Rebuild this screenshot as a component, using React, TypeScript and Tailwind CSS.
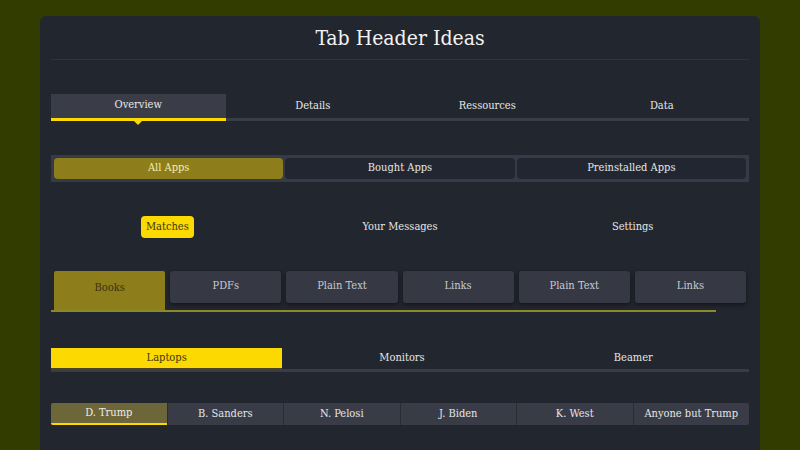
import { useState } from "react";

const font = { fontFamily: '"DejaVu Serif Condensed", "DejaVu Serif", "Liberation Serif", serif' };

function TopTabs() {
  const tabs = ["Overview", "Details", "Ressources", "Data"];
  const [active, setActive] = useState(0);
  return (
    <div className="flex items-start mt-[34px] border-b-[3px] border-[#3a3d47]">
      {tabs.map((t, i) => (
        <button
          key={t}
          onClick={() => setActive(i)}
          className={
            i === active
              ? "relative flex-1 h-[27px] -mb-[3px] pb-[2px] bg-[#3a3d47] border-b-[3px] border-[#fcd900] text-[11px] text-[#e6e6e6]"
              : "relative flex-1 h-[24px] pt-[1px] text-[11px] text-[#e6e6e6]"
          }
        >
          {t}
          {i === active && (
            <span className="absolute left-1/2 -translate-x-1/2 top-full w-0 h-0 border-l-[7px] border-r-[7px] border-t-[7px] border-l-transparent border-r-transparent border-t-[#fcd900]" />
          )}
        </button>
      ))}
    </div>
  );
}

function Segmented() {
  const tabs = ["All Apps", "Bought Apps", "Preinstalled Apps"];
  const [active, setActive] = useState(0);
  return (
    <div className="flex gap-[2px] mt-[34px] p-[3px] bg-[#363946]">
      {tabs.map((t, i) => (
        <button
          key={t}
          onClick={() => setActive(i)}
          className={
            i === active
              ? "flex-1 h-[21px] rounded-[4px] bg-[#8d7d1b] text-[11px] text-[#f3ecb2]"
              : "flex-1 h-[21px] rounded-[4px] bg-[#222630] text-[11px] text-[#e6e6e6]"
          }
        >
          {t}
        </button>
      ))}
    </div>
  );
}

function Pills() {
  const tabs = ["Matches", "Your Messages", "Settings"];
  const [active, setActive] = useState(0);
  return (
    <div className="flex mt-[34px]">
      {tabs.map((t, i) => (
        <div key={t} className="flex-1 flex justify-center">
          <button
            onClick={() => setActive(i)}
            className={
              i === active
                ? "h-[22px] px-[5px] rounded-[4px] bg-[#fcd900] text-[11px] text-[#3b3612]"
                : "h-[22px] px-[5px] rounded-[4px] text-[11px] text-[#e6e6e6]"
            }
          >
            {t}
          </button>
        </div>
      ))}
    </div>
  );
}

function CardTabs() {
  const tabs = ["Books", "PDFs", "Plain Text", "Links", "Plain Text", "Links"];
  const [active, setActive] = useState(0);
  return (
    <div className="mt-[33px]">
      <div className="flex gap-[5px] px-[3px] items-start">
        {tabs.map((t, i) => (
          <button
            key={i}
            onClick={() => setActive(i)}
            className={
              i === active
                ? "flex-1 h-[39px] rounded-t-[2px] bg-[#8d7d1b] text-[11px] text-[#3a3410] pb-[5px]"
                : "flex-1 h-[32px] rounded-[3px] bg-[#363943] shadow-[0_2px_4px_rgba(0,0,0,0.45)] text-[11px] text-[#c9cad0] pb-[2px]"
            }
          >
            {t}
          </button>
        ))}
      </div>
      <div className="w-[95.3%] h-[2px] bg-[#8c8a28]" />
    </div>
  );
}

function LineTabs() {
  const tabs = ["Laptops", "Monitors", "Beamer"];
  const [active, setActive] = useState(0);
  return (
    <div className="flex mt-[36px] border-b-[3px] border-[#393c46]">
      {tabs.map((t, i) => (
        <button
          key={t}
          onClick={() => setActive(i)}
          className={
            i === active
              ? "flex-1 h-[22px] -mb-[3px] mr-[4px] bg-[#fcd900] border-b-[2px] border-[#4a4520] text-[11px] text-[#3b3612]"
              : "flex-1 h-[21px] text-[11px] text-[#e6e6e6]"
          }
        >
          {t}
        </button>
      ))}
    </div>
  );
}

function NameTabs() {
  const tabs = ["D. Trump", "B. Sanders", "N. Pelosi", "J. Biden", "K. West", "Anyone but Trump"];
  const [active, setActive] = useState(0);
  return (
    <div className="flex mt-[31px] rounded-[2px] overflow-hidden bg-[#2a2d36] gap-[1px]">
      {tabs.map((t, i) => (
        <button
          key={i}
          onClick={() => setActive(i)}
          className={
            i === active
              ? "flex-1 h-[22px] bg-[#6c6638] border-b-[2px] border-[#fcd900] text-[11px] text-[#ececec]"
              : "flex-1 h-[22px] bg-[#393c47] text-[11px] text-[#e6e6e6]"
          }
        >
          {t}
        </button>
      ))}
    </div>
  );
}

export default function App() {
  return (
    <div className="w-[800px] h-[450px] overflow-hidden bg-[#333c00] pt-[16px] px-[40px]" style={font}>
      <div className="h-[460px] bg-[#22262f] rounded-t-[6px] px-[11px]">
        <h1 className="h-[44px] pt-[3px] flex items-center justify-center text-[21px] text-[#f2f2f2] border-b border-[#2f333c]">
          Tab Header Ideas
        </h1>
        <TopTabs />
        <Segmented />
        <Pills />
        <CardTabs />
        <LineTabs />
        <NameTabs />
      </div>
    </div>
  );
}
